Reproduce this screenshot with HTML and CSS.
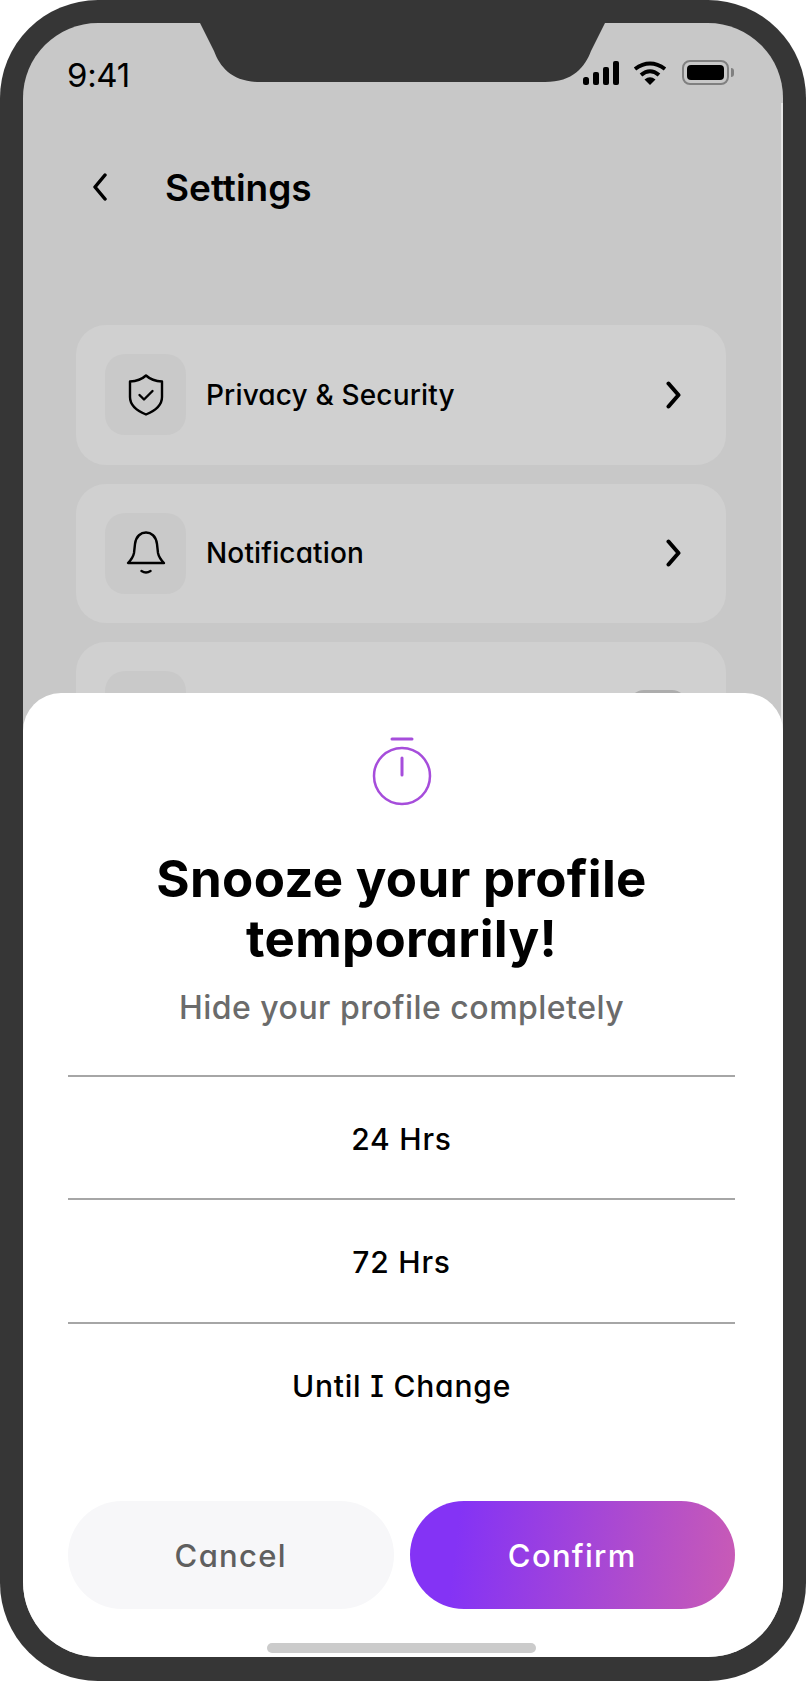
FILE: index.html
```html
<!DOCTYPE html>
<html lang="en">
<head>
    <meta charset="UTF-8">
    <meta name="viewport" content="width=device-width, initial-scale=1.0">
    <title>Snooze your profile</title>
    <link rel="stylesheet" href="styles.css">
</head>
<body>
    <div class="phone">
        <div class="screen">
            <svg class="notch" width="405" height="59" viewBox="0 0 405 59">
                <path d="M0 0 L14 28 C20 44 32 59 60 59 L345 59 C373 59 385 44 391 28 L405 0 Z" fill="#363636"/>
            </svg>

            <div class="status-bar">
                <span class="time">9:41</span>
                <div class="status-icons">
                    <svg width="36" height="24" viewBox="0 0 36 24">
                        <rect x="0" y="16" width="6" height="8" rx="2.5"/>
                        <rect x="10" y="11" width="6" height="13" rx="2"/>
                        <rect x="20" y="6" width="6" height="18" rx="2"/>
                        <rect x="30" y="0" width="6" height="24" rx="2"/>
                    </svg>
                    <svg class="wifi" width="34" height="24" viewBox="0 0 34 24" fill="none" stroke="#000" stroke-width="4">
                        <path d="M2 8 Q17 -3 32 8"/>
                        <path d="M8 14 Q17 6.500 26 14"/>
                        <path d="M17 24 L11.500 18.500 Q17 14 22.500 18.500 Z" fill="#000" stroke="none"/>
                    </svg>
                    <div class="battery"><span class="battery-level"></span></div>
                    <span class="battery-nub"></span>
                </div>
            </div>

            <div class="nav">
                <svg width="16" height="28" viewBox="0 0 16 28" fill="none" stroke="#000" stroke-width="3.500" stroke-linecap="round" stroke-linejoin="round">
                    <path d="M13 2 L3 14 L13 26"/>
                </svg>
                <h2>Settings</h2>
            </div>

            <div class="settings-list">
                <div class="settings-row">
                    <div class="row-icon">
                        <svg width="36" height="42" viewBox="0 0 36 42" fill="none" stroke="#000" stroke-width="2.400" stroke-linecap="round" stroke-linejoin="round">
                            <path d="M18 1.500 Q24 7 34 7.500 L34 23 Q34 34 18 40.500 Q2 34 2 23 L2 7.500 Q12 7 18 1.500 Z"/>
                            <path d="M11.500 21 L16 25.500 L24.500 17"/>
                        </svg>
                    </div>
                    <span class="row-label">Privacy &amp; Security</span>
                    <svg class="chevron" width="15" height="28" viewBox="0 0 15 28" fill="none" stroke="#000" stroke-width="4" stroke-linecap="round" stroke-linejoin="round">
                        <path d="M2.500 2.500 L12.500 14 L2.500 25.500"/>
                    </svg>
                </div>
                <div class="settings-row">
                    <div class="row-icon">
                        <svg width="40" height="44" viewBox="0 0 40 44" fill="none" stroke="#000" stroke-width="2.400" stroke-linecap="round" stroke-linejoin="round">
                            <path d="M2 32 L38 32 Q33 27 32 22 L31 13 C30 5 25 1.500 20 1.500 C15 1.500 10 5 9 13 L8 22 Q7 27 2 32 Z"/>
                            <path d="M15.500 40 Q20 43 24.500 40"/>
                        </svg>
                    </div>
                    <span class="row-label">Notification</span>
                    <svg class="chevron" width="15" height="28" viewBox="0 0 15 28" fill="none" stroke="#000" stroke-width="4" stroke-linecap="round" stroke-linejoin="round">
                        <path d="M2.500 2.500 L12.500 14 L2.500 25.500"/>
                    </svg>
                </div>
                <div class="settings-row">
                    <div class="row-icon"></div>
                    <span class="toggle"></span>
                </div>
            </div>

            <div class="sheet">
                <svg class="timer" width="62" height="70" viewBox="0 0 62 70" fill="none" stroke="#a64ddb" stroke-width="2.500" stroke-linecap="round">
                    <path d="M21 2 L41 2" stroke-width="3"/>
                    <circle cx="31" cy="39" r="28"/>
                    <path d="M31 21 L31 38" stroke-width="3"/>
                </svg>
                <h1>Snooze your profile<br>temporarily!</h1>
                <p class="subtitle">Hide your profile completely</p>
                <ul class="options">
                    <li>24 Hrs</li>
                    <li>72 Hrs</li>
                    <li>Until I Change</li>
                </ul>
                <div class="actions">
                    <button class="btn btn-cancel">Cancel</button>
                    <button class="btn btn-confirm">Confirm</button>
                </div>
                <div class="home-bar"></div>
            </div>
        </div>
    </div>
</body>
</html>
```

FILE: styles.css
```css
* {
    box-sizing: border-box;
}
body {
    margin: 0;
    background-color: #fff;
    font-family: Inter, "Liberation Sans", sans-serif;
    font-feature-settings: "cv11", "cv08";
    color: #000;
}
.phone {
    width: 806px;
    height: 1681px;
    padding: 23px;
    background-color: #363636;
    border-radius: 98px;
}
.screen {
    position: relative;
    width: 760px;
    height: 1634px;
    overflow: hidden;
    background-color: #c8c8c8;
    border-radius: 75px;
}
/* thin light edge down the right side of the screen */
.screen::before {
    content: "";
    position: absolute;
    top: 80px;
    right: 0;
    width: 2px;
    height: 1480px;
    background-color: #e6e6e6;
}
.notch {
    position: absolute;
    top: 0;
    left: 177px;
}
.status-bar {
    display: flex;
    justify-content: space-between;
    align-items: center;
    height: 75px;
    padding: 29px 49px 0 44px;
}
.time {
    font-size: 33px;
    font-weight: 400;
    font-feature-settings: normal;
    letter-spacing: -0.3px;
}
.status-icons {
    display: flex;
    align-items: center;
    margin-top: -5px;
}
.wifi {
    margin-left: 14.500px;
}
.battery {
    width: 47px;
    height: 25px;
    margin-left: 15px;
    padding: 3px;
    border: 2px solid #808080;
    border-radius: 8px;
}
.battery-level {
    display: block;
    height: 100%;
    background-color: #000;
    border-radius: 4px;
}
.battery-nub {
    width: 3px;
    height: 9px;
    margin-left: 2px;
    background-color: #808080;
    border-radius: 0 3px 3px 0;
}
.nav {
    display: flex;
    align-items: center;
    gap: 57px;
    height: 60px;
    margin-top: 59px;
    padding-left: 69px;
}
.nav h2 {
    margin: 0;
    font-size: 37px;
    font-weight: 600;
}
.settings-list {
    display: flex;
    flex-direction: column;
    gap: 19px;
    margin: 108px 57px 0 53px;
}
.settings-row {
    display: flex;
    align-items: center;
    height: 139.500px;
    padding: 0 45px 0 29px;
    background-color: #d0d0d0;
    border-radius: 30px;
}
.row-icon {
    display: flex;
    justify-content: center;
    align-items: center;
    width: 81px;
    height: 81px;
    margin-right: 20px;
    background-color: #c9c9c9;
    border-radius: 20px;
}
.row-label {
    flex: 1;
    font-size: 28px;
    font-weight: 500;
    letter-spacing: 0.15px;
}
.toggle {
    width: 56px;
    height: 44px;
    margin-left: auto;
    margin-right: -5px;
    background-color: #adadad;
    border-radius: 14px;
}
.sheet {
    position: absolute;
    left: 0;
    right: 0;
    bottom: 0;
    height: 964px;
    padding: 44px 48px 0 45px;
    text-align: center;
    background-color: #fff;
    border-radius: 38px 38px 0 0;
}
.timer {
    display: block;
    margin: 0 auto;
}
.sheet h1 {
    margin: 42px 0 0;
    font-size: 51px;
    font-weight: 700;
    line-height: 60px;
    letter-spacing: 0.3px;
}
.subtitle {
    margin: 17px 0 0;
    font-size: 32px;
    font-weight: 500;
    line-height: 44px;
    letter-spacing: 0.48px;
    color: #6b6b6b;
}
.options {
    margin: 45px 0 0;
    padding: 0;
    list-style: none;
}
.options li {
    height: 123.500px;
    font-size: 30px;
    font-weight: 500;
    line-height: 125px;
    letter-spacing: 0.8px;
    border-top: 2px solid #a6a6a6;
}
.options li:first-child {
    height: 123px;
}
.actions {
    display: flex;
    gap: 16px;
    margin-top: 56px;
}
.btn {
    flex: 1;
    height: 108px;
    font-family: inherit;
    font-feature-settings: inherit;
    font-size: 31px;
    font-weight: 500;
    letter-spacing: 1.3px;
    border: none;
    border-radius: 54px;
}
.btn-cancel {
    color: #5f5f5f;
    background-color: #f7f7f9;
}
.btn-confirm {
    color: #fff;
    background: linear-gradient(97deg, #8433f5 15%, #c95bb5 100%);
}
.home-bar {
    width: 269px;
    height: 10px;
    margin: 34px auto 0;
    background-color: #cbcbcb;
    border-radius: 5px;
}
```
